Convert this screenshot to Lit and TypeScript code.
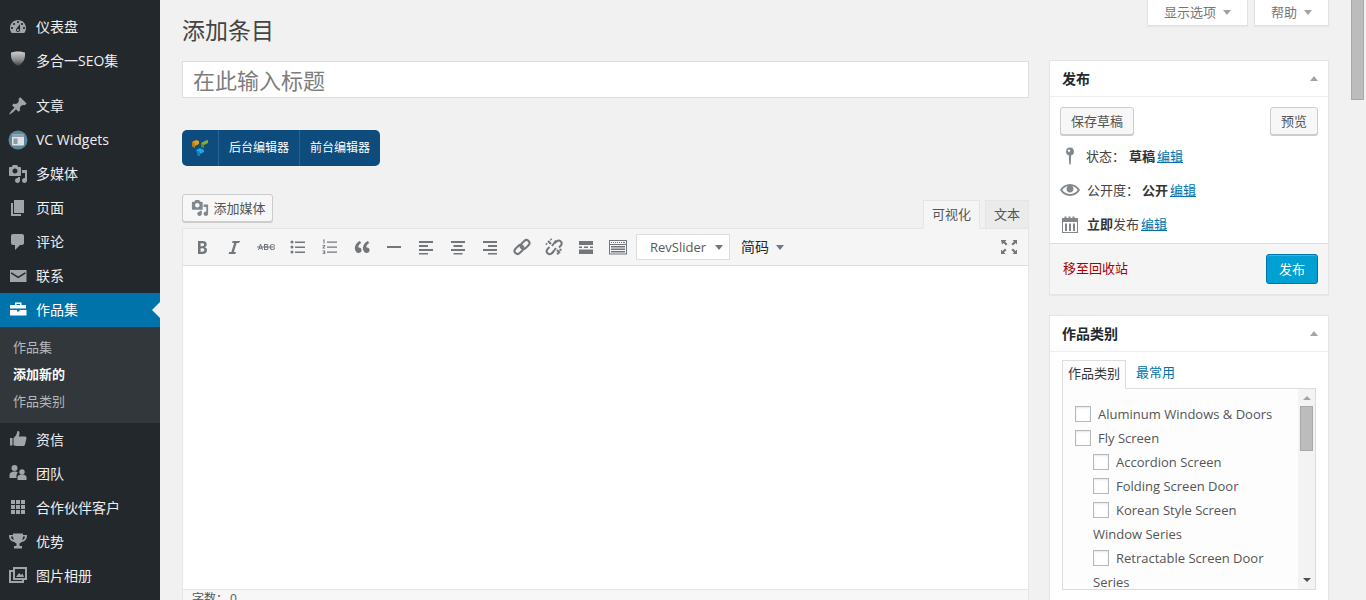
import { LitElement, html, css, svg } from "lit";
import { customElement } from "lit/decorators.js";

const P: Record<string, any> = {
  dash: svg`<path d="M3.76 16h12.48c1.1-1.37 1.76-3.11 1.76-5 0-4.42-3.58-8-8-8s-8 3.58-8 8c0 1.89.66 3.63 1.76 5zM10 4c.55 0 1 .45 1 1s-.45 1-1 1-1-.45-1-1 .45-1 1-1zM6 6c.55 0 1 .45 1 1s-.45 1-1 1-1-.45-1-1 .45-1 1-1zm8 0c.55 0 1 .45 1 1s-.45 1-1 1-1-.45-1-1 .45-1 1-1zm-5.37 5.55L12 7v6c0 1.1-.9 2-2 2s-2-.9-2-2c0-.57.24-1.08.63-1.45zM4 10c.55 0 1 .45 1 1s-.45 1-1 1-1-.45-1-1 .45-1 1-1zm12 0c.55 0 1 .45 1 1s-.45 1-1 1-1-.45-1-1 .45-1 1-1zm-5 3c0-.55-.45-1-1-1s-1 .45-1 1 .45 1 1 1 1-.45 1-1z" fill-rule="evenodd"/>`,
  shield: svg`<defs><linearGradient id="sh" x1="0" y1="0" x2="0" y2="1"><stop offset="0" stop-color="#cfd0d1"/><stop offset=".55" stop-color="#8d8f91"/><stop offset="1" stop-color="#3c3f42"/></linearGradient></defs><path d="M3 1.500C5 1 8 .5 10 .5s5 .5 7 1c.3 6-.8 10-7 13.500C3.800 11.500 2.700 7.500 3 1.500z" fill="url(#sh)"/>`,
  pin: svg`<path d="M10.44 3.02l1.82-1.82 6.36 6.35-1.83 1.82c-1.05-.68-2.48-.57-3.41.36l-.75.75c-.92.93-1.04 2.35-.35 3.41l-1.83 1.82-2.41-2.41-2.8 2.79c-.42.42-3.38 2.71-3.8 2.29s1.86-3.39 2.28-3.81l2.79-2.79L4.1 9.360l1.83-1.82c1.05.69 2.48.57 3.4-.36l.75-.75c.93-.92 1.05-2.35.36-3.41z"/>`,
  vc: svg`<circle cx="10" cy="10" r="9.500" fill="#5d87a1"/><rect x="4" y="4.500" width="12" height="11" rx="1" fill="#dfe3e5"/><rect x="4" y="4.500" width="12" height="2.500" fill="#8fa0ab"/><rect x="5.500" y="8.500" width="4" height="5.500" fill="#8a9aa5"/>`,
  media: svg`<path d="M13 11V4c0-.55-.45-1-1-1h-1.670L9 1H5L3.670 3H2c-.55 0-1 .45-1 1v7c0 .55.45 1 1 1h10c.55 0 1-.45 1-1zM7 4.500c1.380 0 2.500 1.120 2.500 2.500S8.380 9.500 7 9.500 4.500 8.380 4.500 7 5.620 4.500 7 4.500zM14 6h5v10.500c0 1.380-1.120 2.500-2.500 2.500S14 17.880 14 16.500s1.120-2.500 2.500-2.500c.17 0 .34.02.5.05V9h-3V6zm-4 8.050V13h2v3.500c0 1.380-1.120 2.500-2.500 2.500S7 17.880 7 16.500 8.120 14 9.500 14c.17 0 .34.02.5.05z"/>`,
  page: svg`<path d="M6 15V2h10v13H6zm-1 1h8v2H3V5h2v11z"/>`,
  comment: svg`<path d="M5 2h9c1.100 0 2 .9 2 2v7c0 1.100-.9 2-2 2h-2l-5 5v-5H5c-1.100 0-2-.9-2-2V4c0-1.100.9-2 2-2z"/>`,
  mail: svg`<path fill-rule="evenodd" d="M2 4h16.500v12H2zM3.500 6.200l-.8 1.200 7.500 4.800 7.600-4.800-.8-1.200-6.800 4.200z"/>`,
  brief: svg`<path d="M7 2.500h6.500V5H18v3.500H2V5h5zM8.500 4v1h3.500V4z" fill-rule="evenodd"/><path d="M2 10h7v1.500h2.500V10H18.500v5.500H2z"/>`,
  thumb: svg`<path d="M2 8h2.500v7.500H2zM5.500 8c2-1.500 3.500-3.500 3.700-6.500.1-1 2.300-1 2.300 1.500 0 1.500-.5 2.500-.8 3.500H17c1.500 0 1.800 1.500 1.300 2.500l-1.300 5.500c-.3 1.300-1 1.500-2 1.500H9c-1.500 0-2.200-.8-3.500-.8z"/>`,
  team: svg`<circle cx="6.500" cy="4" r="3"/><path d="M1.500 14v-3c0-2 2-3.500 5-3.500 1.500 0 2.600.4 3.300 1-.9 1-1.300 2-1.300 3.200V14z"/><circle cx="14" cy="8" r="2.700"/><path d="M9.500 16v-3c0-1.500 2-2.500 4.500-2.500s4.500 1 4.500 2.500v3z"/>`,
  grid: svg`<path d="M3 2h4v4H3zM8 2h4v4H8zM13 2h4v4h-4zM3 7h4v4H3zM8 7h4v4H8zM13 7h4v4h-4zM3 12h4v4H3zM8 12h4v4H8zM13 12h4v4h-4z"/>`,
  trophy: svg`<path fill-rule="evenodd" d="M5 1.500h10v1.500h4c0 4-1.500 6.500-5.500 7-.5.7-1.200 1.200-2 1.500V14H14v2.500H6V14h2.500v-2.500c-.8-.3-1.500-.8-2-1.500C2.500 9.500 1 7 1 3h4zM3 4.500c.2 1.800 1 3 2.700 3.500C5.300 7 5.100 5.800 5 4.500zM15 4.500c-.1 1.300-.3 2.500-.7 3.500 1.700-.5 2.500-1.700 2.700-3.500z"/>`,
  gallery: svg`<path fill-rule="evenodd" d="M5 1h14v13h-3v3H1V4h4zM7 3v9h10V3zM3 6v9h11v-1H5V6z"/><path d="M8 11l3-4 2 2 1.500-1.500L16 11z"/>`,
  ul: svg`<circle cx="4" cy="5" r="1.500"/><circle cx="4" cy="10" r="1.500"/><circle cx="4" cy="15" r="1.500"/><path d="M7 4.500h10V6H7zM7 9.500h10V11H7zM7 14.500h10V16H7z"/>`,
  ol: svg`<path d="M7 4.500h10V5.700H7zM7 9.500h10v1.200H7zM7 14.500h10v1.200H7zM3 2.500h1.500v4H3.500V3.500H3zM2.500 8h2.700v1L3.700 10.700h1.500v.8H2.500v-.8l1.600-1.900H2.500zM2.500 13.500h2.700v3.500H2.500v-.8h1.700v-.6H3v-.8h1.200v-.5H2.500z"/>`,
  quote: svg`<path d="M9.490 13.220c0-.74-.2-1.380-.61-1.900-.62-.78-1.830-.88-2.530-.72-.29-1.650 1.110-3.750 2.920-4.650L7.880 4c-2.730 1.300-5.420 4.280-4.960 8.050C3.210 14.430 4.590 16 6.540 16c.85 0 1.560-.25 2.120-.75s.83-1.180.83-2.030zm8.050 0c0-.74-.2-1.380-.61-1.900-.63-.78-1.830-.88-2.530-.72-.29-1.650 1.110-3.750 2.920-4.650L15.930 4c-2.730 1.300-5.410 4.280-4.950 8.050.29 2.380 1.660 3.950 3.610 3.950.85 0 1.560-.25 2.120-.75s.83-1.180.83-2.030z"/>`,
  hr: svg`<path d="M3 9h14v2H3z"/>`,
  left: svg`<path d="M3 4h14v2H3zM3 8h9v2H3zM3 12h14v2H3zM3 16h9v1.500H3z"/>`,
  center: svg`<path d="M3 4h14v2H3zM5.500 8h9v2h-9zM3 12h14v2H3zM5.500 16h9v1.500h-9z"/>`,
  right: svg`<path d="M3 4h14v2H3zM8 8h9v2H8zM3 12h14v2H3zM8 16h9v1.500H8z"/>`,
  link: svg`<g fill="none" stroke="currentColor" stroke-width="2"><rect x="10" y="2.500" width="6" height="10" rx="3" transform="rotate(45 13 7.500)"/><rect x="4" y="7.500" width="6" height="10" rx="3" transform="rotate(45 7 12.500)"/></g>`,
  unlink: svg`<g fill="none" stroke="currentColor" stroke-width="2"><path d="M11 6l1.800-1.800a3 3 0 0 1 4.200 4.200L15 10.500M9.500 14.500L7.500 16.500a3 3 0 0 1-4.200-4.200L5.500 10"/><path d="M7.500 3l-1 -1M3 7.500L2 6.500M4 4l3 3M13 13l3 3M14 17.500l-.5-2M17.500 13l-2-.5M12 3.500L8 9M8 16.500l4-5.500"/></g>`,
  more: svg`<path d="M3 4h14v4H3zM3 9.500h3V11H3zM8 9.500h4V11H8zM14 9.500h3V11h-3zM3 12.500h14V17H3z"/>`,
  kitchen: svg`<path fill-rule="evenodd" d="M1 3h18v14.500H1zM2 4v3h16V4zM2 8v8.500h16V8z"/><path d="M3 5h1v1H3zM5 5h1v1H5zM7 5h1v1H7zM9 5h1v1H9zM11 5h1v1h-1zM13 5h1v1h-1zM15 5h2v1h-2zM3 9h14v1.500H3zM3 11.500h14V13H3zM3 14h14v1.500H3z"/>`,
  full: svg`<path d="M2 3h5.500L6 4.500l2.500 2.500L7 8.500 4.500 6 3 7.500zM18 3v4.500L16.500 6 14 8.500 12.500 7 15 4.500 13.500 3zM2 17v-4.500L3.500 14 6 11.500 7.500 13 5 15.500 6.500 17zM18 17h-4.500l1.500-1.500-2.500-2.500 1.500-1.500 2.500 2.500 1.500-1.500z"/>`,
  mapPin: svg`<path fill-rule="evenodd" d="M10 1.500a4 4 0 0 1 1.200 7.800L10.700 18.500h-1.400L8.800 9.300A4 4 0 0 1 10 1.500zM9 3.500a1.200 1.200 0 1 0 .01 0z"/>`,
  eye: svg`<path d="M19.700 9.400C17.700 6 14 3.900 10 3.900S2.300 6 .3 9.400L0 10l.3.6c2 3.400 5.700 5.500 9.700 5.500s7.700-2.100 9.700-5.500l.3-.6-.3-.6zM10 14.100c-3.100 0-6-1.600-7.700-4.100C3.600 8 5.700 6.600 8 6.100c-.9.6-1.500 1.700-1.500 2.900 0 1.900 1.600 3.500 3.500 3.500s3.500-1.600 3.500-3.500c0-1.200-.6-2.300-1.500-2.900 2.300.5 4.400 1.900 5.700 3.900-1.700 2.500-4.600 4.100-7.700 4.100z"/>`,
  cal: svg`<path fill-rule="evenodd" d="M2 4h2.500V2.500h2V4h2V2.500h2V4h2V2.500h2V4H18v15H2zM3 8v10h14V8z"/><path d="M5 9.500h2V17H5zM9 9.500h2V17H9zM13 9.500h2V17h-2z"/>`,
};

const icon = (name: string, cls = "") =>
  html`<svg class="ic ${cls}" viewBox="0 0 20 20" fill="currentColor" aria-hidden="true">${P[name]}</svg>`;

@customElement("app-root")
export class AppRoot extends LitElement {
  static styles = css`
    :host { display: block; height: 600px; overflow: hidden; position: relative; background: #f1f1f1; color: #444;
      font: 13px/1.4 "Open Sans", "Noto Sans CJK SC", sans-serif; }
    * { box-sizing: border-box; }
    .page { display: flex; height: 600px; overflow: hidden; }
    .ic { width: 20px; height: 20px; display: block; flex: none; }

    .side { width: 160px; flex: none; background: #23282d; padding-top: 10px; color: #fff; }
    .mi { height: 34px; display: flex; align-items: center; gap: 8px; padding-left: 8px; font-size: 14px; color: #eee; position: relative; }
    .mi .ic { color: #a0a5aa; }
    .mi.gap { margin-top: 11px; }
    .mi.cur { background: #0073aa; color: #fff; }
    .mi.cur .ic { color: #fff; }
    .mi.cur::after { content: ""; position: absolute; right: 0; top: 9px; border: 8px solid transparent; border-right-color: #f1f1f1; }
    .sub { background: #32373c; padding: 7px 0 0; height: 96px; }
    .sub div { height: 27px; padding-left: 13px; line-height: 26px; font-size: 13px; color: #b4b9be; }
    .sub .on { color: #fff; font-weight: 700; }

    .main { flex: 1; display: flex; gap: 20px; padding: 0 37px 0 22px; }
    .left { width: 847px; flex: none; }
    .right { width: 280px; flex: none; }

    h1 { margin: 18px 0 17px; height: 26px; font: 400 23px/25px "Open Sans", "Noto Sans CJK SC", sans-serif; color: #444; }
    .title { height: 37px; background: #fff; border: 1px solid #ddd; padding: 0 10px; font-size: 22px; line-height: 37px; color: #7d7d7d; }
    .vc-wrap { height: 96px; padding-top: 32px; }
    .vc { display: inline-flex; height: 36px; background: #0f4c7e; border-radius: 5px; color: #fff; font-size: 12px; vertical-align: top; }
    .vc > div { display: flex; align-items: center; padding: 0 10px; border-left: 1px solid #2a6393; }
    .vc > div:first-child { border-left: 0; padding: 0 9px; width: 36px; }

    .medrow { height: 34px; display: flex; justify-content: space-between; align-items: flex-start; }
    .btn { display: inline-flex; align-items: center; justify-content: center; height: 28px; background: #f7f7f7; border: 1px solid #ccc; border-radius: 3px; box-shadow: 0 1px 0 #ccc; color: #555; font-size: 13px; }
    .media { gap: 4px; width: 91px; padding-left: 2px; }
    .media .ic { width: 18px; height: 18px; color: #82878c; }
    .tabs { display: flex; gap: 5px; padding-top: 6px; position: relative; z-index: 1; height: 35px; }
    .tab { height: 29px; line-height: 27px; padding: 0 8px; font-size: 13px; color: #555; background: #ebebeb; border: 1px solid #e5e5e5; }
    .tab.on { background: #f5f5f5; border-bottom-color: #f5f5f5; }

    .tb { height: 38px; background: #f5f5f5; border: 1px solid #e5e5e5; border-bottom-color: #ddd; display: flex; align-items: center; padding-left: 3px; color: #555d66; }
    .tb .b { width: 32px; height: 32px; display: flex; align-items: center; justify-content: center; color: #72777c; flex: none; }
    .sel { margin-left: 2px; width: 94px; height: 26px; background: #fff; border: 1px solid #ddd; display: flex; align-items: center; padding-left: 13px; gap: 9px; color: #595959; font-size: 13px; flex: none; }
    .car { width: 0; height: 0; border: 4px solid transparent; border-top: 5px solid #72777c; border-bottom: 0; flex: none; display: block; }
    .sc { display: flex; align-items: center; gap: 7px; margin-left: 11px; color: #23282d; font-size: 14px; }
    .fs { margin-left: auto; margin-right: 3px; }
    .edit { height: 323px; background: #fff; border-left: 1px solid #e5e5e5; border-right: 1px solid #e5e5e5; }
    .foot { height: 24px; background: #f7f7f7; border: 1px solid #e5e5e5; padding: 0 9px; line-height: 18px; font-size: 12px; color: #555; display: flex; gap: 2px; }

    .meta { height: 26px; margin-bottom: 34px; display: flex; justify-content: flex-end; gap: 6px; }
    .mt { background: #fff; border: 1px solid #e1e1e1; border-top: 0; height: 26px; display: flex; align-items: center; justify-content: center; gap: 7px; color: #72777c; font-size: 13px; box-shadow: 0 1px 1px rgba(0,0,0,.04); }
    .mt.a { width: 101px; } .mt.b { width: 75px; }
    .mt .car { border-top-color: #a0a5aa; border-left-width: 4.500px; border-right-width: 4.500px; }

    .box { background: #fff; border: 1px solid #e5e5e5; box-shadow: 0 1px 1px rgba(0,0,0,.04); margin-bottom: 20px; }
    .bh { height: 36px; border-bottom: 1px solid #eee; display: flex; align-items: center; justify-content: space-between; padding: 0 10px 0 12px; font-size: 14px; font-weight: 700; color: #23282d; }
    .up { width: 0; height: 0; border: 4px solid transparent; border-bottom: 5px solid #a0a5aa; border-top: 0; border-left-width: 4.500px; border-right-width: 4.500px; }
    .pb { padding: 10px 10px 0 10px; height: 146px; }
    .btns { display: flex; justify-content: space-between; }
    .btns .btn { height: 28px; padding: 0 10px; }
    .row { height: 34px; display: flex; align-items: center; gap: 7px; color: #444; font-size: 13px; }
    .row.pin { gap: 6px; }
    .row.pin .v { margin-left: -2px; }
    .row.vis .v { margin-left: -4px; }
    .row .ic { color: #82878c; }
    .rows { margin-top: 4px; }
    .row a, .lk { color: #0073aa; }
    .row a { text-decoration: underline; margin-left: 2px; }
    .row b { color: #333; }
    .pf { height: 51px; background: #f5f5f5; border-top: 1px solid #ddd; display: flex; justify-content: space-between; align-items: center; padding: 0 10px 0 13px; }
    .del { color: #a00; font-size: 13px; margin-top: -2px; }
    .pub { width: 52px; height: 30px; background: #00a0d2; border: 1px solid #0073aa; border-radius: 3px; color: #fff; display: flex; align-items: center; justify-content: center; box-shadow: inset 0 1px 0 rgba(120,200,230,.5); }

    .cb { padding: 8px 12px 12px; height: 260px; }
    .ctabs { display: flex; height: 28px; }
    .ct { height: 29px; width: 64px; border: 1px solid #ddd; border-bottom: 1px solid #fdfdfd; background: #fdfdfd; text-align: center; line-height: 25px; color: #32373c; position: relative; z-index: 1; }
    .ct2 { margin-left: 10px; line-height: 25px; }
    .list { height: 202px; width: 254px; border: 1px solid #ddd; background: #fdfdfd; position: relative; overflow: hidden; padding: 13px 0 0 12px; color: #555; font-size: 13px; }
    .li { height: 24px; line-height: 24px; display: flex; align-items: center; white-space: nowrap; gap: 7px; }
    .li.c, .li.w { padding-left: 18px; }
    .chk { width: 16px; height: 16px; background: #fff; border: 1px solid #b4b9be; box-shadow: inset 0 1px 2px rgba(0,0,0,.1); flex: none; }
    .vs { position: absolute; right: 0; top: 0; width: 17px; height: 100%; background: #f3f3f3; }
    .vs i { position: absolute; left: 5px; width: 0; height: 0; border: 4px solid transparent; }
    .vs .u { top: 7px; border-top: 0; border-bottom: 4px solid #a3a3a3; }
    .vs .d { bottom: 7px; border-bottom: 0; border-top: 4px solid #505050; }
    .vs .t { position: absolute; left: 2px; top: 17px; width: 13px; height: 45px; background: #bcbcbc; border: 1px solid #a8a8a8; }

    .bar { position: absolute; right: 0; top: 0; width: 17px; height: 600px; background: #f1f1f1; }
    .bar div { position: absolute; left: 2px; top: 0; width: 13px; height: 100px; background: #bcbcbc; border: 1px solid #a8a8a8; border-top: 0; }
  `;

  private mi(ic: string, t: string, cls = "") {
    return html`<div class="mi ${cls}">${icon(ic)}<span>${t}</span></div>`;
  }

  render() {
    const tools = ["ul", "ol", "quote", "hr", "left", "center", "right", "link", "unlink", "more", "kitchen"];
    return html`
      <div class="page">
        <nav class="side">
          ${this.mi("dash", "仪表盘")}
          ${this.mi("shield", "多合一SEO集")}
          ${this.mi("pin", "文章", "gap")}
          ${this.mi("vc", "VC Widgets")}
          ${this.mi("media", "多媒体")}
          ${this.mi("page", "页面")}
          ${this.mi("comment", "评论")}
          ${this.mi("mail", "联系")}
          ${this.mi("brief", "作品集", "cur")}
          <div class="sub"><div>作品集</div><div class="on">添加新的</div><div>作品类别</div></div>
          ${this.mi("thumb", "资信", "")}
          ${this.mi("team", "团队")}
          ${this.mi("grid", "合作伙伴客户")}
          ${this.mi("trophy", "优势")}
          ${this.mi("gallery", "图片相册")}
        </nav>
        <main class="main">
          <section class="left">
            <h1>添加条目</h1>
            <div class="title">在此输入标题</div>
            <div class="vc-wrap"><div class="vc">
              <div><svg width="18" height="18" viewBox="0 0 18 18"><path d="M1 3l4-2 3 1v3L4 7v2L1 7z" fill="#e09f1f"/><path d="M1 3l3 1.500V9L1 7z" fill="#b57f14"/><path d="M10 4l6-3 1 .5V4l-4 2v3l-3-1.500z" fill="#84ad36"/><path d="M10 4l3 2v3l-3-1.500z" fill="#5f8a22"/><path d="M5 11l4-2 4 2v2l-4 2v2l-3-1v-3z" fill="#22a5e3"/><path d="M5 11l4 2v4l-3-1v-3z" fill="#1582bd"/></svg></div>
              <div>后台编辑器</div><div>前台编辑器</div>
            </div></div>
            <div class="medrow">
              <div class="btn media">${icon("media")}<span>添加媒体</span></div>
              <div class="tabs"><div class="tab on">可视化</div><div class="tab">文本</div></div>
            </div>
            <div class="tb">
              <div class="b"><svg class="ic" viewBox="0 0 20 20" fill="currentColor"><path fill-rule="evenodd" d="M6 4v13h4.540c1.370 0 2.460-.33 3.260-1 .8-.66 1.200-1.580 1.200-2.770 0-.84-.17-1.510-.51-2.010s-.9-.85-1.670-1.030v-.09c.57-.1 1.020-.4 1.360-.9s.51-1.130.51-1.910c0-1.140-.39-1.980-1.170-2.500C12.750 4.260 11.500 4 9.780 4H6zm2.570 5.150V6.260h1.360c.73 0 1.270.11 1.610.32.34.22.51.58.51 1.070 0 .54-.16.92-.47 1.150s-.82.35-1.510.35h-1.500zm0 2.190h1.600c1.440 0 2.160.53 2.160 1.610 0 .6-.17 1.050-.51 1.340s-.86.430-1.570.430H8.570v-3.380z"/></svg></div>
              <div class="b"><svg class="ic" viewBox="0 0 20 20" fill="currentColor"><path d="M14.780 6h-2.130l-2.800 9h2.120l-.62 2H4.600l.62-2h2.140l2.800-9H8.030l.62-2h7.750z"/></svg></div>
              <div class="b"><svg class="ic" viewBox="0 0 20 20" fill="currentColor"><path d="M2 13l2-6h1l2 6H6l-.4-1.300H3.400L3 13zM3.700 11h1.600l-.8-2.700zM8 7h2.500c1.200 0 1.700.6 1.700 1.500 0 .6-.3 1-.8 1.300.7.2 1 .7 1 1.400 0 1.100-.7 1.800-2 1.800H8zM9 8v1.500h1.200c.6 0 1-.2 1-.8S10.800 8 10.200 8zM9 10.500V12h1.300c.7 0 1.100-.2 1.100-.8s-.4-.7-1.100-.7zM18 9c-.2-.9-.8-1.200-1.500-1.200-1 0-1.600.8-1.600 2.200s.6 2.200 1.600 2.200c.8 0 1.300-.4 1.500-1.200h1c-.2 1.400-1.100 2.100-2.500 2.100-1.700 0-2.700-1.200-2.700-3.100s1-3.100 2.700-3.100c1.400 0 2.300.7 2.500 2.100z"/><path d="M1 9.500h18v1H1z"/></svg></div>
              ${tools.map((t) => html`<div class="b">${icon(t)}</div>`)}
              <div class="sel"><span>RevSlider</span><i class="car"></i></div>
              <div class="sc"><span>简码</span><i class="car"></i></div>
              <div class="b fs">${icon("full")}</div>
            </div>
            <div class="edit"></div>
            <div class="foot"><span>字数：</span><span>0</span></div>
          </section>
          <aside class="right">
            <div class="meta">
              <div class="mt a"><span>显示选项</span><i class="car"></i></div>
              <div class="mt b"><span>帮助</span><i class="car"></i></div>
            </div>
            <div class="box">
              <div class="bh"><span>发布</span><i class="up"></i></div>
              <div class="pb">
                <div class="btns"><div class="btn">保存草稿</div><div class="btn">预览</div></div>
                <div class="rows">
                  <div class="row pin">${icon("mapPin")}<span>状态：</span><span class="v"><b>草稿</b><a>编辑</a></span></div>
                  <div class="row vis">${icon("eye")}<span>公开度：</span><span class="v"><b>公开</b><a>编辑</a></span></div>
                  <div class="row">${icon("cal")}<span><b>立即</b>发布<a>编辑</a></span></div>
                </div>
              </div>
              <div class="pf"><span class="del">移至回收站</span><div class="pub">发布</div></div>
            </div>
            <div class="box">
              <div class="bh"><span>作品类别</span><i class="up"></i></div>
              <div class="cb">
                <div class="ctabs"><div class="ct">作品类别</div><div class="ct2 lk">最常用</div></div>
                <div class="list">
                  <div class="li"><i class="chk"></i><span>Aluminum Windows &amp; Doors</span></div>
                  <div class="li"><i class="chk"></i><span>Fly Screen</span></div>
                  <div class="li c"><i class="chk"></i><span>Accordion Screen</span></div>
                  <div class="li c"><i class="chk"></i><span>Folding Screen Door</span></div>
                  <div class="li c"><i class="chk"></i><span>Korean Style Screen</span></div>
                  <div class="li w"><span>Window Series</span></div>
                  <div class="li c"><i class="chk"></i><span>Retractable Screen Door</span></div>
                  <div class="li w"><span>Series</span></div>
                  <div class="vs"><i class="u"></i><div class="t"></div><i class="d"></i></div>
                </div>
              </div>
            </div>
          </aside>
        </main>
      </div>
      <div class="bar"><div></div></div>
    `;
  }
}
